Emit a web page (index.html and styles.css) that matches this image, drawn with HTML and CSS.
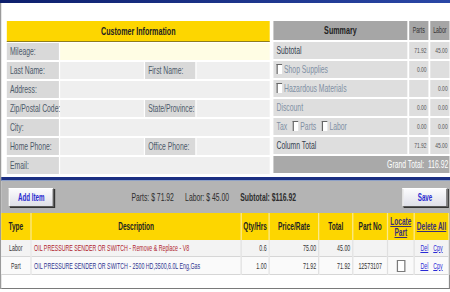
FILE: index.html
```html
<!DOCTYPE html>
<html lang="en">
<head>
  <meta charset="UTF-8" />
  <title>Repair Order</title>
  <link rel="stylesheet" href="styles.css">
</head>
<body>
  <!-- the whole form is drawn wide and squeezed to the narrow window -->
  <div class="sheet">
    <div class="topbar"></div>
    <div class="page">
      <div class="upper">
        <section class="customer">
          <h2 class="cust-head">Customer Information</h2>
          <div class="cust-grid">
            <div class="lbl">Mileage:</div><div class="val wide mileage"></div>
            <div class="lbl">Last Name:</div><div class="val"></div><div class="lbl">First Name:</div><div class="val"></div>
            <div class="lbl">Address:</div><div class="val wide"></div>
            <div class="lbl">Zip/Postal Code:</div><div class="val"></div><div class="lbl">State/Province:</div><div class="val"></div>
            <div class="lbl">City:</div><div class="val wide"></div>
            <div class="lbl">Home Phone:</div><div class="val"></div><div class="lbl">Office Phone:</div><div class="val"></div>
            <div class="lbl">Email:</div><div class="val wide"></div>
          </div>
        </section>

        <section class="summary">
          <div class="sh sh-title">Summary</div><div class="sh">Parts</div><div class="sh">Labor</div>
          <div class="sc dark">Subtotal</div><div class="sn">71.92</div><div class="sn">45.00</div>
          <div class="sc"><span class="chk"></span> Shop Supplies</div><div class="sn">0.00</div><div class="sn"></div>
          <div class="sc"><span class="chk"></span> Hazardous Materials</div><div class="sn"></div><div class="sn">0.00</div>
          <div class="sc">Discount</div><div class="sn">0.00</div><div class="sn">0.00</div>
          <div class="sc">Tax &nbsp; <span class="chk"></span> Parts &nbsp; <span class="chk"></span> Labor</div><div class="sn">0.00</div><div class="sn">0.00</div>
          <div class="sc dark">Column Total</div><div class="sn">71.92</div><div class="sn">45.00</div>
          <div class="grand">Grand Total:&nbsp; 116.92</div>
        </section>
      </div>

      <div class="navline"></div>

      <div class="toolbar">
        <button class="btn">Add Item</button>
        <div class="totals">
          <span>Parts: $ 71.92</span>
          <span>Labor: $ 45.00</span>
          <span class="sub">Subtotal: $116.92</span>
        </div>
        <button class="btn save">Save</button>
      </div>

      <div class="items-wrap">
        <table class="items">
          <colgroup>
            <col class="w-type"><col class="w-desc"><col class="w-qty"><col class="w-price">
            <col class="w-total"><col class="w-pno"><col class="w-loc"><col class="w-del">
          </colgroup>
          <thead>
            <tr>
              <th>Type</th><th>Description</th><th>Qty/Hrs</th><th>Price/Rate</th><th>Total</th><th>Part No</th>
              <th><a href="#">Locate Part</a></th><th><a href="#">Delete All</a></th>
            </tr>
          </thead>
          <tbody>
            <tr class="r1">
              <td class="c">Labor</td>
              <td class="desc labor">OIL PRESSURE SENDER OR SWITCH - Remove &amp; Replace - V8</td>
              <td class="r">0.6</td><td class="r">75.00</td><td class="r">45.00</td><td></td><td></td>
              <td class="acts"><a href="#">Del</a><a href="#">Cpy</a></td>
            </tr>
            <tr class="r2">
              <td class="c">Part</td>
              <td class="desc part">OIL PRESSURE SENDER OR SWITCH - 2500 HD,3500,6.0L Eng,Gas</td>
              <td class="r">1.00</td><td class="r">71.92</td><td class="r">71.92</td><td class="c">12573107</td>
              <td class="c"><span class="locate"></span></td>
              <td class="acts"><a href="#">Del</a><a href="#">Cpy</a></td>
            </tr>
          </tbody>
        </table>
      </div>
    </div>
  </div>
</body>
</html>
```

FILE: styles.css
```css
:root{
  --yellow:#fdd600;
  --navy:#1b2f82;
  --lbl:#d9d9d9;
  --val:#efefef;
  --slate:#8190a4;
}
html,body{overflow:hidden;}
body{
  margin:0;
  font-family:"Liberation Sans",Arial,sans-serif;
  font-size:11px;
  color:#333;
  background:#fff;
}
/* laid out at 726px, squeezed to 450px */
.sheet{
  width:726px;
  transform:scaleX(.62);
  transform-origin:0 0;
}
.topbar{
  height:3px;
  background:linear-gradient(90deg,#0d1f6c,#2a47a6);
}
.page{
  border-left:2px solid #9a9a9a;
}

/* upper panels */
.upper{
  display:flex;
  gap:6px;
  padding:18px 0 0 9px;
}
.customer{
  width:424px;
  flex:none;
}
.cust-head{
  margin:0;
  height:20px;
  line-height:21px;
  background:var(--yellow);
  border-bottom:1px solid #8f7d1c;
  text-align:center;
  font-size:11.5px;
  font-weight:bold;
  color:#222;
}
.cust-grid{
  display:grid;
  grid-template-columns:84px 135px 81px 1fr;
  grid-auto-rows:17px;
  gap:2px 2px;
  padding-top:1px;
}
.lbl{
  background:var(--lbl);
  color:#4d5a6a;
  padding-left:5px;
  line-height:17px;
  white-space:nowrap;
}
.val{background:var(--val);}
.val.wide{grid-column:span 3;}
.val.mileage{background:#fffde4;}

.summary{
  width:284px;
  flex:none;
  display:grid;
  grid-template-columns:216px 31px 31px;
  grid-template-rows:19px;
  grid-auto-rows:17px;
  gap:2px 3px;
}
.sh{
  background:#a6a6a6;
  color:#333;
  font-size:8.5px;
  line-height:19px;
  text-align:center;
}
.sh-title{
  font-size:11.5px;
  font-weight:bold;
  color:#222;
}
.sc{
  background:#dedede;
  color:var(--slate);
  padding-left:5px;
  line-height:17px;
  white-space:nowrap;
}
.sc.dark{color:#34414f;}
.sn{
  background:#dedede;
  color:#555;
  font-size:8px;
  line-height:17px;
  text-align:right;
  padding-right:3px;
}
.chk{
  display:inline-block;
  width:7px;
  height:9px;
  margin-bottom:-1px;
  background:#fff;
  border:solid #666;
  border-width:1px 0 0 2px;
}
.grand{
  grid-column:1 / -1;
  background:#a9a9a9;
  color:#fff;
  text-align:right;
  font-size:11px;
  line-height:17px;
  padding-right:2px;
  white-space:nowrap;
}

/* toolbar */
.navline{
  height:3px;
  margin-top:3px;
  background:var(--navy);
  border-bottom:1px solid #8ea0c6;
}
.toolbar{
  display:flex;
  align-items:center;
  height:32px;
  padding:0 4px 0 12px;
  background:#b4b4b4;
}
.btn{
  width:73px;
  height:19px;
  padding:0;
  font-family:inherit;
  font-size:10px;
  font-weight:bold;
  color:#2b2bd0;
  background:linear-gradient(#fbfbfd,#dfe0e8);
  border:solid;
  border-width:1px 2px;
  border-color:#fff #5a5a5a #5a5a5a #fff;
  box-shadow:2px 1px 0 #333;
}
.save{margin-left:auto;}
.totals{
  margin-left:125px;
  color:#2e2e2e;
}
.totals span{margin-right:15px;}
.totals .sub{font-weight:bold;}

/* items table */
.items-wrap{
  border-right:2px solid #8a8a8a;
  border-bottom:1px solid #7a7a7a;
  padding-bottom:13px;
}
.items{
  width:722px;
  table-layout:fixed;
  border-collapse:collapse;
}
.w-type{width:48px;}
.w-desc{width:339px;}
.w-qty{width:45px;}
.w-price{width:80px;}
.w-total{width:55px;}
.w-pno{width:56px;}
.w-loc{width:43px;}
.w-del{width:56px;}
.items th{
  height:27px;
  padding:0;
  background:var(--yellow);
  border-right:2px solid #fbe98c;
  font-size:10.5px;
  color:#222;
  line-height:11px;
}
.items th a{color:#3a2f7a;}
.items td{
  height:16px;
  padding:0 3px;
  border-right:2px solid #e0e0e0;
  border-bottom:1px solid #d6d6d6;
  font-size:8.5px;
  color:#333;
  white-space:nowrap;
  overflow:hidden;
}
.items .r1 td{background:#f3f3f3;}
.items .r2 td{background:#fafafa;height:17px;}
.items td.c{text-align:center;}
.items td.r{text-align:right;}
.items td.desc{padding-left:4px;}
.items td.labor{color:#b0232e;}
.items td.part{color:#2f3590;}
.items td.acts{text-align:center;font-size:8.5px;}
.acts a{color:#2a2ad6;margin:0 4px;}
.locate{
  display:inline-block;
  width:10px;
  height:10px;
  border:solid #7a7a7a;
  border-width:1px 2px;
  background:#fff;
  vertical-align:middle;
}
```
